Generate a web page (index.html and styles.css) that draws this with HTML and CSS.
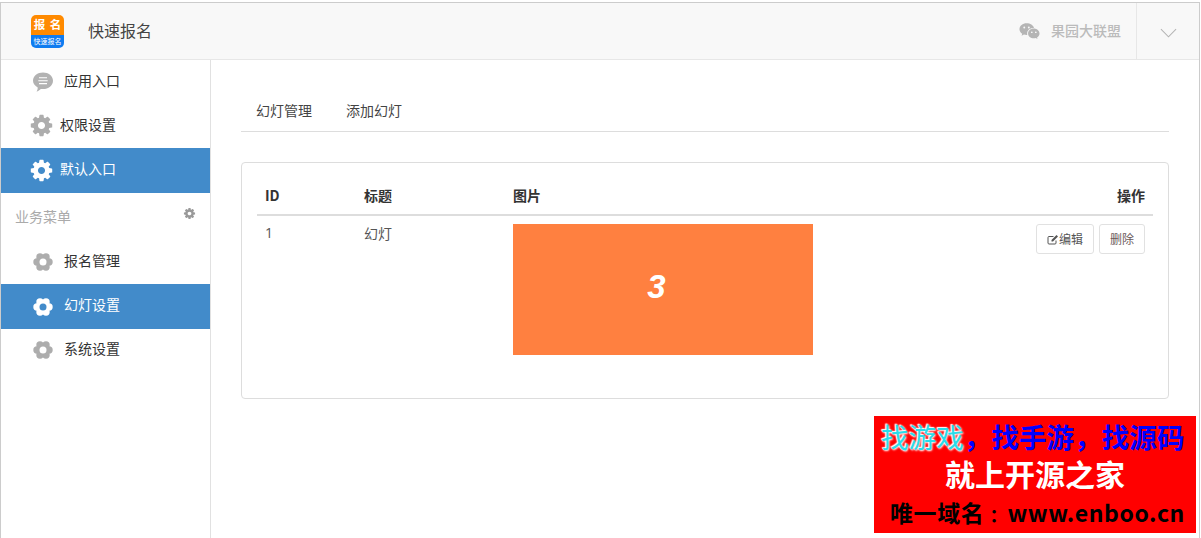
FILE: index.html
```html
<!DOCTYPE html>
<html lang="zh-CN">
<head>
<meta charset="utf-8">
<title>快速报名</title>
<link rel="stylesheet" href="styles.css">
</head>
<body>
<svg class="defs" width="0" height="0" aria-hidden="true">
  <symbol id="gear" viewBox="0 0 1792 1792">
    <path fill-rule="evenodd" d="M1152 896q0-106-75-181t-181-75-181 75-75 181 75 181 181 75 181-75 75-181zm512-109v222q0 12-8 23t-20 13l-185 28q-19 54-39 91 35 50 107 138 10 12 10 25t-9 23q-27 37-99 108t-94 71q-12 0-26-9l-138-108q-44 23-91 38-16 136-29 186-7 28-36 28h-222q-14 0-24.500-8.500t-11.500-21.500l-28-184q-49-16-90-37l-141 107q-10 9-25 9-14 0-25-11-126-114-165-168-7-10-7-23 0-12 8-23 15-21 51-66.500t54-70.500q-27-50-41-99l-183-27q-13-2-21-12.500t-8-23.500v-222q0-12 8-23t19-13l186-28q14-46 39-92-40-57-107-138-10-12-10-24 0-10 9-23 26-36 98.500-107.500t94.500-71.500q13 0 26 10l138 107q44-23 91-38 16-136 29-186 7-28 36-28h222q14 0 24.500 8.500t11.500 21.500l28 184q49 16 90 37l142-107q9-9 24-9 13 0 25 10 129 119 165 170 7 8 7 22 0 12-8 23-15 21-51 66.500t-54 70.500q26 50 41 98l183 28q13 2 21 12.500t8 23.500z"/>
  </symbol>
  <symbol id="flower" viewBox="0 0 20 20">
    <circle cx="10" cy="10" r="6.600"/>
    <circle cx="16" cy="10" r="3.700"/>
    <circle cx="4" cy="10" r="3.700"/>
    <circle cx="13" cy="4.900" r="3.700"/>
    <circle cx="7" cy="4.900" r="3.700"/>
    <circle cx="13" cy="15.100" r="3.700"/>
    <circle cx="7" cy="15.100" r="3.700"/>
    <circle class="hole" cx="10" cy="10" r="3.500"/>
  </symbol>
</svg>
<div class="frame">
  <header class="topbar">
    <div class="brand">
      <div class="logo">
        <div class="logo-top">报 名</div>
        <div class="logo-bottom">快速报名</div>
      </div>
      <div class="brand-name">快速报名</div>
    </div>
    <div class="account">
      <svg class="wechat" viewBox="0 0 22 18" width="21" height="18">
        <path d="M8 1C3.800 1 .5 3.700.5 7.100c0 2 1.100 3.600 2.900 4.800l-.7 2.100 2.500-1.300c.9.200 1.800.4 2.800.4h.7a5.400 5.400 0 0 1-.2-1.500c0-3.300 2.900-5.800 6.500-5.800h.7C14.900 3 11.800 1 8 1z" class="we-fill"/>
        <path d="M21.500 11.600c0-2.800-2.800-5.100-6-5.100-3.400 0-6 2.300-6 5.100s2.600 5.100 6 5.100c.7 0 1.400-.1 2-.3l1.900 1-.5-1.700c1.600-1 2.600-2.400 2.600-4.100z" class="we-fill"/>
        <circle cx="5.500" cy="5.300" r="1" fill="#f8f8f8"/><circle cx="10.300" cy="5.300" r="1" fill="#f8f8f8"/>
        <circle cx="13.400" cy="10.300" r=".9" fill="#f8f8f8"/><circle cx="17.600" cy="10.300" r=".9" fill="#f8f8f8"/>
      </svg>
      <span class="account-name">果园大联盟</span>
    </div>
    <div class="toggle">
      <svg viewBox="0 0 18 10" width="17" height="10"><path d="M1 1l8 8 8-8" fill="none" stroke="#b4b4b4" stroke-width="1.100"/></svg>
    </div>
  </header>
  <div class="body">
    <aside class="sidebar">
      <a class="item item-first">
        <svg class="ic ic-chat" viewBox="0 0 20 20" width="20" height="20">
          <path d="M10 .5c5.500 0 10 3.500 10 8.300s-4.500 8.300-10 8.300c-.8 0-1.500-.1-2.200-.2-1 1-2.600 2.300-4.300 2.600.8-1 1.300-2.600 1.200-4C1.900 13.900 0 11.500 0 8.800 0 4 4.500.5 10 .5z" fill="#b2b2b2"/>
          <path d="M6 5.800h8M5.300 8.700h9.400M6 11.600h8" stroke="#fff" stroke-width="1.100"/>
        </svg>
        <span>应用入口</span>
      </a>
      <a class="item item-tight">
        <svg class="ic"><use href="#gear"/></svg>
        <span>权限设置</span>
      </a>
      <a class="item item-tight active">
        <svg class="ic"><use href="#gear"/></svg>
        <span>默认入口</span>
      </a>
      <div class="group">
        <span>业务菜单</span>
        <svg class="group-gear"><use href="#gear"/></svg>
      </div>
      <a class="item">
        <svg class="ic ic-flower"><use href="#flower"/></svg>
        <span>报名管理</span>
      </a>
      <a class="item active">
        <svg class="ic ic-flower"><use href="#flower"/></svg>
        <span>幻灯设置</span>
      </a>
      <a class="item item-last">
        <svg class="ic ic-flower"><use href="#flower"/></svg>
        <span>系统设置</span>
      </a>
    </aside>
    <main class="main">
      <nav class="tabs">
        <a class="tab">幻灯管理</a>
        <a class="tab">添加幻灯</a>
      </nav>
      <section class="panel">
        <table class="table">
          <thead>
            <tr>
              <th class="col-id">ID</th>
              <th class="col-title">标题</th>
              <th>图片</th>
              <th class="col-act">操作</th>
            </tr>
          </thead>
          <tbody>
            <tr>
              <td class="cell-id">1</td>
              <td>幻灯</td>
              <td><div class="slide"><span class="slide-num">3</span></div></td>
              <td class="col-act">
                <div class="actions">
                  <a class="btn">
                    <svg viewBox="0 0 12 11" width="12" height="11"><path d="M9 6.500V9a1 1 0 0 1-1 1H2a1 1 0 0 1-1-1V3.500a1 1 0 0 1 1-1h4.500" fill="none" stroke="#555" stroke-width="1"/><path d="M4.500 7.500V6l5-5 1.500 1.500-5 5z" fill="#555"/></svg>编辑</a>
                  <a class="btn btn-del">删除</a>
                </div>
              </td>
            </tr>
          </tbody>
        </table>
      </section>
    </main>
  </div>
</div>
<aside class="ad">
  <div class="ad-l1"><span class="ad-glow">找游戏</span>，找手游，找源码</div>
  <div class="ad-l2">就上开源之家</div>
  <div class="ad-l3">唯一域名<span class="ad-colon">：</span>www.enboo.cn</div>
</aside>
</body>
</html>
```
FILE: styles.css
```css
* { box-sizing: border-box; }
html, body { height: 100%; }
body {
  margin: 0;
  padding: 2px 1px 0 0;
  overflow: hidden;
  background: #fff;
  color: #333;
  font-family: "Noto Sans CJK SC", "Open Sans", sans-serif;
  font-size: 14px;
  line-height: 20px;
}
.defs { position: absolute; }
.frame {
  height: 536px;
  border: 1px solid #ccc;
  border-bottom: 0;
  display: flex;
  flex-direction: column;
}
.topbar {
  height: 57px;
  flex: none;
  display: flex;
  align-items: center;
  background: #f8f8f8;
  border-bottom: 1px solid #e7e7e7;
}
.brand { display: flex; align-items: center; padding-left: 30px; flex: 1; }
.logo {
  width: 33px;
  height: 33px;
  border-radius: 5px;
  overflow: hidden;
  display: flex;
  flex-direction: column;
  color: #fff;
  text-align: center;
}
.logo-top {
  height: 20px;
  background: #ff8a00;
  font-size: 11.500px;
  line-height: 19px;
  font-weight: 700;
  word-spacing: 2px;
  white-space: pre;
}
.logo-bottom {
  height: 13px;
  background: #0f7cf0;
  font-size: 7px;
  line-height: 13px;
  white-space: nowrap;
}
.brand-name { margin-left: 24px; font-size: 16px; color: #444; margin-top: -2px; }
.account { display: flex; align-items: center; padding-right: 14px; color: #bbb; font-size: 14px; font-weight: 500; }
.account-name { width: 71px; white-space: nowrap; margin-top: -2px; }
.we-fill { fill: #b5b5b5; }
.wechat { margin-right: 11px; }
.toggle {
  width: 63px;
  height: 56px;
  border-left: 1px solid #e7e7e7;
  display: flex;
  align-items: center;
  justify-content: center;
  padding-top: 3px;
}
.body { flex: 1; display: flex; min-height: 0; }
.sidebar { width: 210px; flex: none; border-right: 1px solid #e1e1e1; }
.item {
  height: 45px;
  display: flex;
  align-items: center;
  padding-left: 31px;
  color: #333;
  font-size: 14px;
}
.item span { margin-bottom: 3px; }
.item-first { height: 43px; }
.item-last { height: 41px; }
.item-tight { padding-left: 28px; }
.item .ic {
  width: 25px;
  height: 25px;
  fill: #adadad;
  margin-right: 6px;
  flex: none;
  --hole: #fff;
}
.item .ic-chat { width: 20px; height: 20px; margin-left: 1px; margin-right: 11px; }
.item .ic-flower { width: 20px; height: 20px; margin-left: 1px; margin-right: 11px; }
.hole { fill: var(--hole); }
.active { background: #428bca; color: #fff; }
.active .ic { fill: #fff; --hole: #428bca; }
.active span { margin-bottom: 5px; }
.group {
  height: 46px;
  display: flex;
  justify-content: space-between;
  padding: 14px 14px 0 14px;
  color: #aaa;
  font-size: 14px;
}
.group span { margin-top: -1px; }
.group-gear { width: 13px; height: 13px; fill: #999; margin-top: 0; }
.main { flex: 1; padding: 32px 30px 0 30px; min-width: 0; }
.tabs { height: 40px; border-bottom: 1px solid #ddd; display: flex; padding-left: 15px; gap: 34px; align-items: flex-start; }
.tab { color: #444; font-size: 14px; line-height: 36px; }
.panel {
  margin-top: 30px;
  height: 237px;
  border: 1px solid #ddd;
  border-radius: 4px;
  padding: 15px;
}
.table { width: 100%; border-collapse: collapse; table-layout: fixed; }
.table th {
  height: 37px;
  padding: 0 8px 2px;
  text-align: left;
  border-bottom: 2px solid #ddd;
  font-size: 14px;
  color: #333;
  font-weight: 700;
}
.col-id { width: 99px; }
.col-title { width: 149px; }
.table th.col-act, .table td.col-act { text-align: right; width: 340px; }
.table td { padding: 8px; vertical-align: top; color: #555; font-size: 14px; line-height: 18px; }
.table td.cell-id { font-family: "Open Sans", sans-serif; }
.slide {
  width: 300px;
  height: 131px;
  background: #ff8040;
  display: flex;
  align-items: center;
  justify-content: center;
}
.slide-num {
  color: #fff;
  font: italic 700 33px/1 "Liberation Sans", sans-serif;
  margin-top: -6px;
  margin-left: -13px;
}
.actions { display: flex; justify-content: flex-end; gap: 5px; }
.btn {
  display: inline-flex;
  align-items: center;
  height: 30px;
  padding: 0 10px;
  border: 1px solid #e1e1e1;
  border-radius: 3px;
  font-size: 12px;
  color: #555;
  background: #fff;
}
.btn-del { color: #6b5a5a; }
.ad {
  position: absolute;
  left: 874px;
  top: 416px;
  width: 322px;
  height: 117px;
  background: #f00;
  overflow: hidden;
  text-align: center;
  font-weight: 700;
  white-space: nowrap;
}
.ad-l1 { color: #00f; font-size: 27.600px; line-height: 41px; text-align: left; padding-left: 7px; }
.ad-glow { color: #29dcea; font-weight: 400; text-shadow: 0 0 2px #fff, 1px 1px 2px #fff, -1px -1px 1px #fff; }
.ad-l2 { color: #fff; font-size: 30px; line-height: 32px; }
.ad-l3 { color: #000; font-size: 23px; line-height: 36px; margin-top: 5px; text-align: left; padding-left: 16px; letter-spacing: .6px; }
.ad-colon { font-size: 18px; letter-spacing: 0; margin-left: 5px; }
```
